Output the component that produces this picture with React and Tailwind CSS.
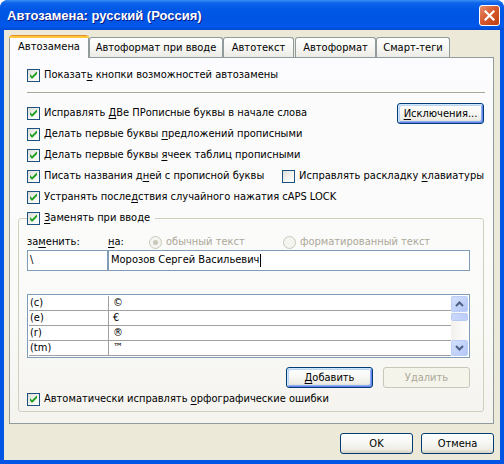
import React from 'react'

const btnBase =
  'h-[21px] rounded-[3px] border flex items-center justify-center text-[11px] leading-none'
const btnNormal =
  'border-[#003c74] text-black bg-[linear-gradient(to_bottom,#ffffff_0%,#f7f7f4_45%,#eeede6_80%,#d6d0c5_100%)]'
const btnFocus =
  'shadow-[inset_1px_1px_0_#cee7ff,inset_-1px_-1px_0_#6982ee,inset_2px_2px_0_#bcd4f6,inset_-2px_-2px_0_#89adf4]'
const btnDisabled = 'border-[#c9c7ba] text-[#aca899] bg-[#f5f4ea]'

function U({ children }) {
  return <span className="underline underline-offset-[2px]">{children}</span>
}

function Check({ checked }) {
  return (
    <span className="w-[13px] h-[13px] shrink-0 border border-[#1c5180] bg-[linear-gradient(135deg,#dcdcd7_0%,#f4f4f0_55%,#ffffff_100%)] flex">
      {checked && (
        <svg width="11" height="11" viewBox="0 0 11 11">
          <path d="M2 4 L4 6.2 L8.5 1.8 L9 1.8 L9 4 L4.5 8.5 L3.5 8.5 L2 6.5 Z" fill="#21a121" />
        </svg>
      )}
    </span>
  )
}

function CheckRow({ checked, children, className = '' }) {
  return (
    <div className={'flex items-center gap-[4px] ' + className}>
      <Check checked={checked} />
      <span className="whitespace-nowrap">{children}</span>
    </div>
  )
}

function Radio({ checked, children }) {
  return (
    <div className="flex items-center gap-[4px] text-[#aca899]">
      <span className="w-[13px] h-[13px] shrink-0 rounded-full border border-[#cac8bb] bg-[#f4f4f0] flex items-center justify-center">
        {checked && <span className="w-[5px] h-[5px] rounded-full bg-[#cac8bb]" />}
      </span>
      <span className="whitespace-nowrap">{children}</span>
    </div>
  )
}

function Tab({ active, children, className = '' }) {
  if (active) {
    return (
      <div
        className={
          'relative z-10 -mb-[1px] h-[23px] rounded-t-[3px] border-x border-[#919b9c] bg-[#fcfcfe] flex flex-col ' +
          className
        }
      >
        <div className="h-[1px] mx-[1px] bg-[#e68b2c] rounded-t-[2px]" />
        <div className="h-[2px] -mx-[1px] bg-[#ffc73c]" />
        <div className="flex-1 flex items-center justify-center pb-[1px]">{children}</div>
      </div>
    )
  }
  return (
    <div
      className={
        'h-[20px] rounded-t-[3px] border-x border-t border-[#919b9c] bg-[linear-gradient(to_bottom,#ffffff_0%,#f7f7f4_50%,#ecebe6_100%)] flex items-center justify-center pt-[1px] ' +
        className
      }
    >
      {children}
    </div>
  )
}

function ScrollBtn({ up }) {
  return (
    <div className="h-[16px] rounded-[2px] border border-[#bbcdf8] bg-[linear-gradient(to_bottom_right,#d3e0fd,#b3c6f6)] flex items-center justify-center">
      <svg width="9" height="6" viewBox="0 0 9 6">
        <path
          d={up ? 'M1 5 L4.5 1.5 L8 5' : 'M1 1 L4.5 4.5 L8 1'}
          stroke="#4d6185"
          strokeWidth="2"
          fill="none"
        />
      </svg>
    </div>
  )
}

const entries = [
  ['(c)', '©'],
  ['(e)', '€'],
  ['(r)', '®'],
  ['(tm)', '™'],
]

export default function App() {
  return (
    <div className="w-[504px] h-[464px] flex flex-col bg-[#0055e5] rounded-t-[8px] overflow-hidden font-['DejaVu_Sans_Condensed','DejaVu_Sans',sans-serif] [font-stretch:condensed] text-[11px] text-black">
      {/* title bar */}
      <div className="h-[30px] shrink-0 flex items-center pl-[7px] pr-[4px] bg-[linear-gradient(to_bottom,#3b8ff6_0%,#0d63ea_10%,#0058e6_30%,#0054e3_60%,#0058ea_88%,#0049d2_100%)]">
        <span className="flex-1 pt-[1px] text-white font-bold text-[13px] font-['Liberation_Sans',sans-serif] [font-stretch:normal] [text-shadow:1px_1px_0_#0a1883]">
          Автозамена: русский (Россия)
        </span>
        <div className="w-[21px] h-[21px] rounded-[3px] border border-white bg-[linear-gradient(135deg,#e8906f_0%,#d65a2f_45%,#c13f10_100%)] flex items-center justify-center">
          <svg width="11" height="11" viewBox="0 0 11 11">
            <path d="M1.5 1.5 L9.5 9.5 M9.5 1.5 L1.5 9.5" stroke="#ffffff" strokeWidth="2.2" strokeLinecap="square" />
          </svg>
        </div>
      </div>

      {/* client */}
      <div className="flex-1 mx-[4px] mb-[4px] bg-[#ece9d8] flex flex-col pt-[5px] pl-[5px] pr-[6px] pb-[6px]">
        {/* tabs */}
        <div className="h-[22px] flex items-end">
          <Tab active className="w-[80px]">Автозамена</Tab>
          <Tab className="w-[134px]">Автоформат при вводе</Tab>
          <Tab className="w-[71px]">Автотекст</Tab>
          <Tab className="w-[81px] ml-[1px]">Автоформат</Tab>
          <Tab className="w-[74px]">Смарт-теги</Tab>
        </div>

        {/* tab page */}
        <div className="h-[367px] border border-[#919b9c] bg-[linear-gradient(to_bottom,#fcfcfe_0%,#fafaf8_70%,#f4f3ee_100%)] pl-[8px] pr-[9px] pt-[7px]">
          <CheckRow checked className="h-[21px] pl-[9px]">
            Показат<U>ь</U> кнопки возможностей автозамены
          </CheckRow>
          <div className="mt-[6px] ml-[9px] -mr-[1px] h-[1px] bg-[#aca899]" />

          <div className="mt-[10px] h-[21px] pl-[9px] flex items-center justify-between">
            <CheckRow checked>
              Исправлять <U>Д</U>Ве ПРописные буквы в начале слова
            </CheckRow>
            <button className={btnBase + ' ' + btnNormal + ' ' + btnFocus + ' w-[87px]'}>
              <span>
                <U>И</U>сключения...
              </span>
            </button>
          </div>
          <CheckRow checked className="h-[21px] pl-[9px]">
            Делать первые буквы <U>п</U>редложений прописными
          </CheckRow>
          <CheckRow checked className="h-[21px] pl-[9px]">
            Делать первые буквы <U>я</U>чеек таблиц прописными
          </CheckRow>
          <div className="h-[21px] pl-[9px] flex items-center">
            <CheckRow checked className="w-[256px]">
              Писать названия д<U>н</U>ей с прописной буквы
            </CheckRow>
            <CheckRow>
              Исправлять раскладку <U>к</U>лавиатуры
            </CheckRow>
          </div>
          <CheckRow checked className="h-[21px] pl-[9px]">
            Устранять после<U>д</U>ствия случайного нажатия cAPS LOCK
          </CheckRow>

          {/* group */}
          <fieldset className="border border-[#d0d0bf] rounded-[3px] pl-[8px] pr-[13px] pb-[4px]">
            <legend className="pr-[5px]">
              <CheckRow checked className="h-[21px]">
                <U>З</U>аменять при вводе
              </CheckRow>
            </legend>
            <div className="mt-[5px] h-[16px] flex items-center">
              <span className="w-[81px]">
                за<U>м</U>енить:
              </span>
              <span className="w-[41px]">
                <U>н</U>а:
              </span>
              <div className="w-[134px]">
                <Radio checked>обычный текст</Radio>
              </div>
              <Radio>форматированный текст</Radio>
            </div>
            <div className="flex h-[21px]">
              <div className="w-[81px] border border-[#7f9db9] bg-white flex items-center pl-[2px]">\</div>
              <div className="flex-1 border border-[#7f9db9] bg-white flex items-center pl-[2px]">
                Морозов Сергей Васильевич
                <span className="ml-[1px] w-[1px] h-[13px] bg-black" />
              </div>
            </div>

            {/* list */}
            <div className="mt-[23px] h-[64px] border border-[#7f9db9] bg-white p-[1px] flex">
              <div className="flex-1">
                {entries.map(([a, b]) => (
                  <div key={a} className="h-[15px] flex border-b border-[#a0a0a0]">
                    <div className="w-[79px] pl-[1px] flex items-center">{a}</div>
                    <div className="flex-1 border-l border-[#a0a0a0] pl-[4px] flex items-center">{b}</div>
                  </div>
                ))}
              </div>
              <div className="w-[17px] flex flex-col bg-[linear-gradient(to_right,#f3f1ec,#fefefe)]">
                <ScrollBtn up />
                <div className="mt-[1px] h-[8px] rounded-[2px] border border-[#b7cbf5] bg-[linear-gradient(to_right,#cad8fc,#bccdf8)]" />
                <div className="flex-1" />
                <ScrollBtn />
              </div>
            </div>

            <div className="mt-[9px] flex justify-end gap-[10px]">
              <button className={btnBase + ' ' + btnNormal + ' ' + btnFocus + ' w-[87px]'}>
                <span>
                  <U>Д</U>обавить
                </span>
              </button>
              <button className={btnBase + ' ' + btnDisabled + ' w-[87px]'}>Удалить</button>
            </div>

            <CheckRow checked className="mt-[3px] h-[16px]">
              Автоматически исправлять <U>о</U>рфографические ошибки
            </CheckRow>
          </fieldset>
        </div>

        {/* dialog buttons */}
        <div className="mt-[9px] flex justify-end gap-[8px]">
          <button className={btnBase + ' ' + btnNormal + ' w-[73px]'}>OK</button>
          <button className={btnBase + ' ' + btnNormal + ' w-[73px]'}>Отмена</button>
        </div>
      </div>
    </div>
  )
}
